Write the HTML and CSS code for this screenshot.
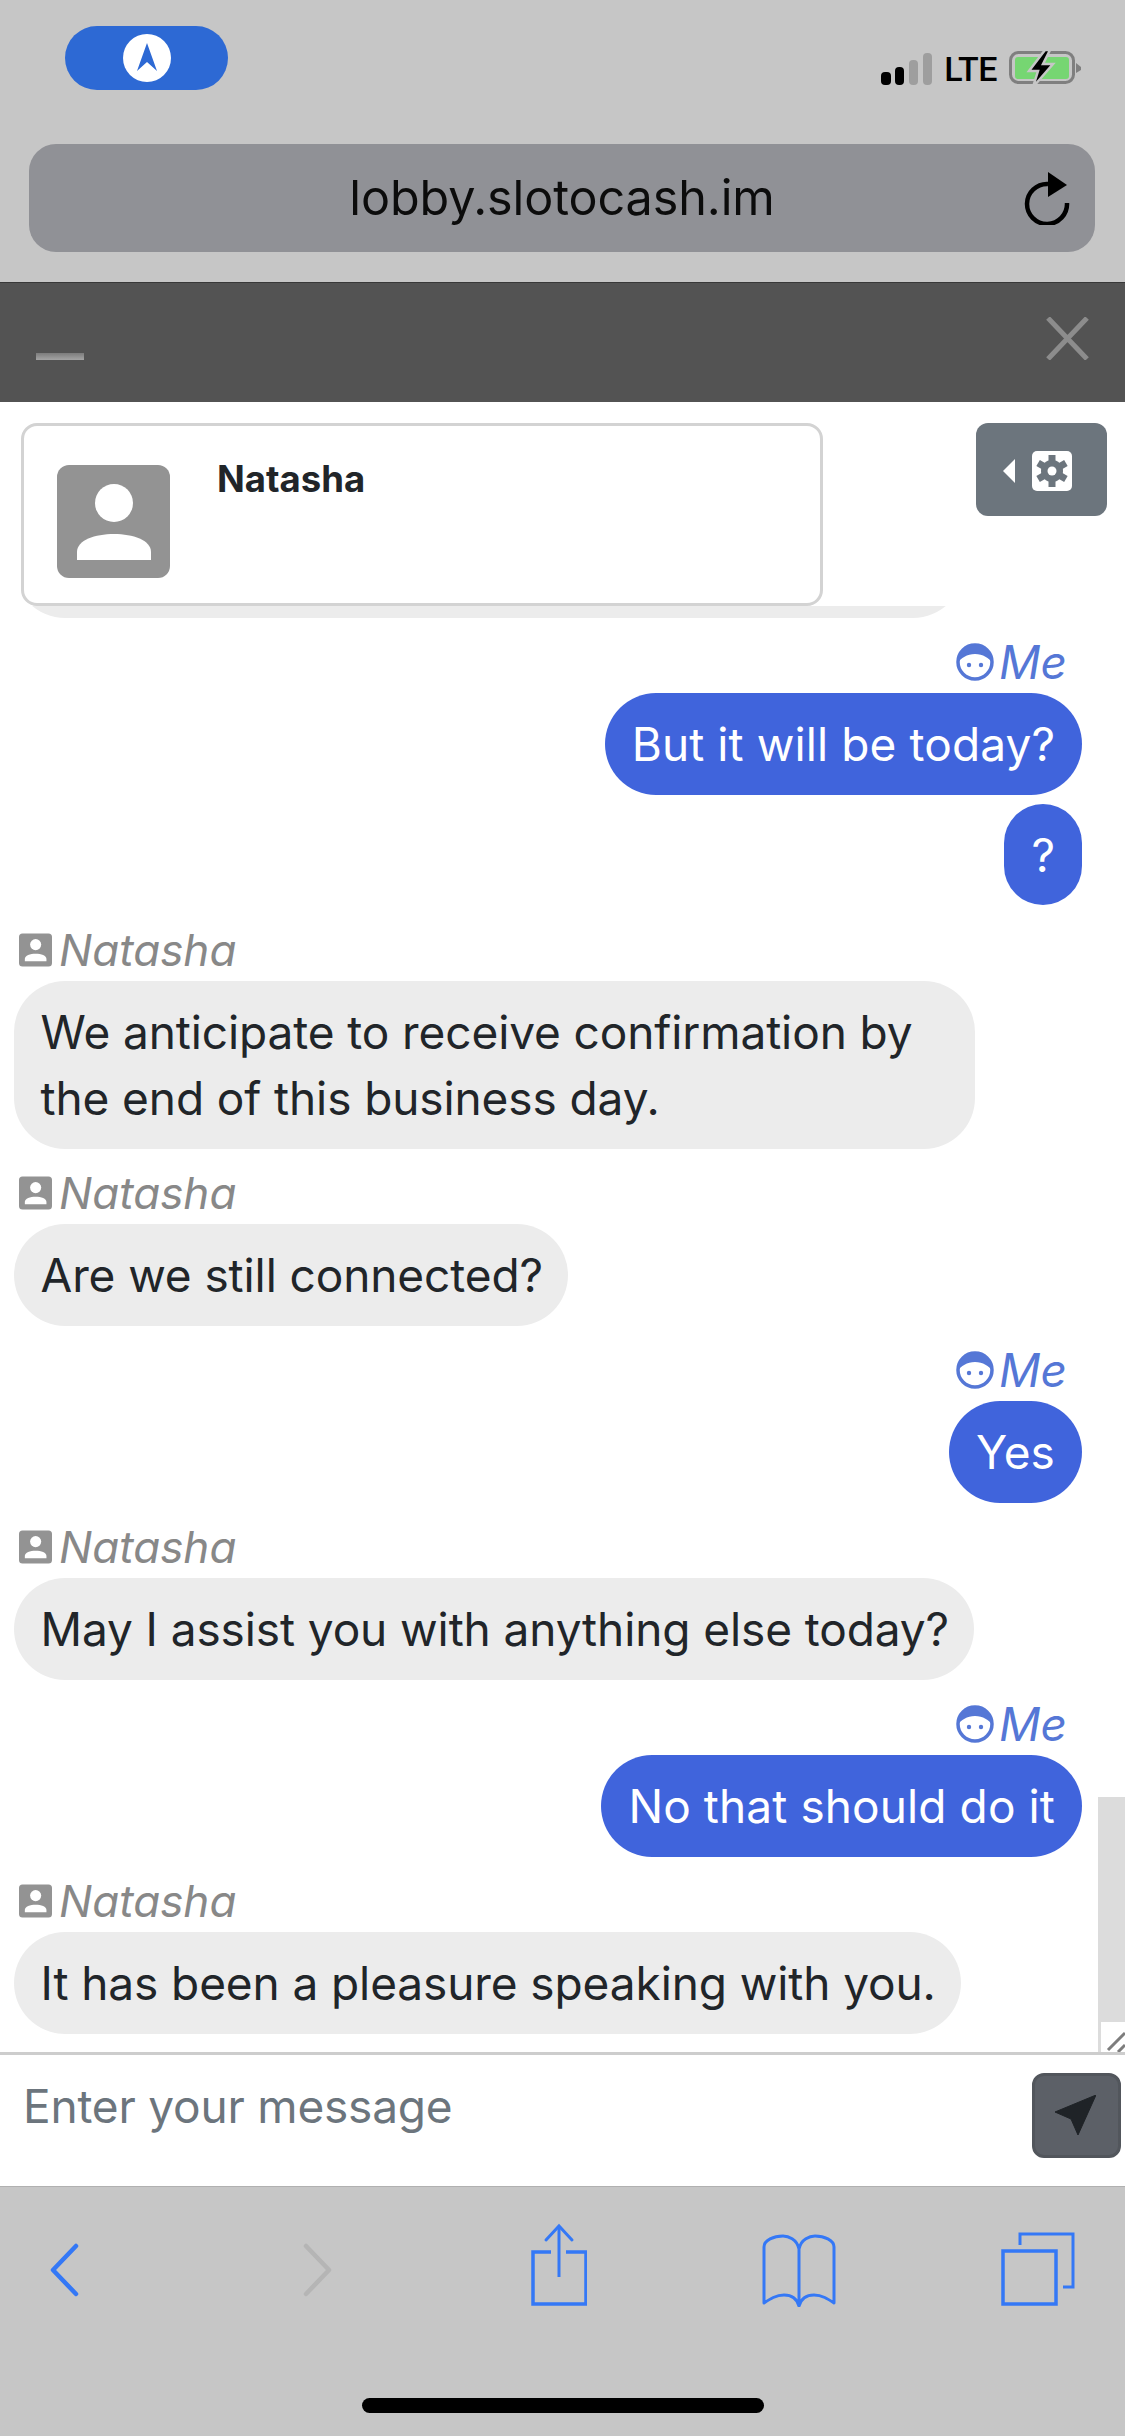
FILE: index.html
```html
<!DOCTYPE html>
<html lang="en">
<head>
<meta charset="utf-8">
<title>Chat</title>
<link rel="stylesheet" href="styles.css">
</head>
<body>
<svg class="defs" width="0" height="0" aria-hidden="true">
  <symbol id="contact" viewBox="0 0 113 113">
    <rect width="113" height="113" rx="12" fill="#939393"/>
    <ellipse cx="57" cy="38" rx="19" ry="19" fill="#fff"/>
    <path d="M20 95V87C20 75 38 69 57 69S94 75 94 87V95Z" fill="#fff"/>
  </symbol>
  <symbol id="face" viewBox="0 0 38 38">
    <circle cx="19" cy="19" r="17" fill="none" stroke="#5577d6" stroke-width="3.500"/>
    <path d="M1.500 20A17.500 17.500 0 0 1 36.500 20C33 15 27 11 19 11S5 15 1.500 20Z" fill="#5577d6"/>
    <circle cx="13" cy="22" r="2.200" fill="#5577d6"/>
    <circle cx="25" cy="22" r="2.200" fill="#5577d6"/>
  </symbol>
</svg>
<div class="phone">
  <header class="status-bar">
    <svg class="nav-pill" width="163" height="64" viewBox="0 0 163 64">
      <rect width="163" height="64" rx="32" fill="#2d69d4"/>
      <circle cx="82" cy="32" r="24" fill="#fff"/>
      <path d="M82 17L72 45L82 36L92 45Z" fill="#2d69d4"/>
    </svg>
    <div class="status-right">
      <svg width="51" height="32" viewBox="0 0 51 32">
        <rect x="0" y="19" width="10" height="13" rx="4" fill="#000"/>
        <rect x="14" y="14" width="9" height="18" rx="4" fill="#000"/>
        <rect x="28" y="7" width="9" height="25" rx="4" fill="#9e9e9e"/>
        <rect x="42" y="0" width="9" height="32" rx="4" fill="#9e9e9e"/>
      </svg>
      <span class="lte">LTE</span>
      <svg class="battery" width="72" height="36" viewBox="0 0 72 36">
        <rect x="1.500" y="1.500" width="63" height="30" rx="8" fill="none" stroke="#7f7f7f" stroke-width="3"/>
        <rect x="6" y="6" width="54" height="22" rx="3" fill="#76d672"/>
        <path d="M67 12L72 16V19L67 22Z" fill="#7f7f7f"/>
        <path d="M36 -1L20 20H29L24 36L44 13H34L41 -1Z" fill="#000" stroke="#c6c6c6" stroke-width="2.500"/>
      </svg>
    </div>
  </header>
  <div class="url-row">
    <div class="url-bar">
      <span class="url-text">lobby.slotocash.im</span>
      <svg class="reload" width="46" height="54" viewBox="0 0 46 54">
        <path d="M24 13A20 20 0 1 0 43 32" fill="none" stroke="#000" stroke-width="4.500"/>
        <path d="M24 1L43 14L24 26Z" fill="#000"/>
      </svg>
    </div>
  </div>
  <div class="chat-header">
    <span class="minimize"></span>
    <svg class="close" width="43" height="43" viewBox="0 0 43 43">
      <path d="M2 1L41 42M41 1L2 42" stroke="#8c8c8c" stroke-width="5" fill="none"/>
    </svg>
  </div>
  <main class="chat-body">
    <div class="messages">
      <div class="bubble in partial">&nbsp;</div>

      <div class="label me"><svg width="38" height="38"><use href="#face"/></svg><span>Me</span></div>
      <div class="bubble out">But it will be today?</div>
      <div class="bubble out">?</div>

      <div class="label them"><svg width="33" height="34"><use href="#contact"/></svg><span>Natasha</span></div>
      <div class="bubble in">We anticipate to receive confirmation by the end of this business day.</div>

      <div class="label them"><svg width="33" height="34"><use href="#contact"/></svg><span>Natasha</span></div>
      <div class="bubble in">Are we still connected?</div>

      <div class="label me"><svg width="38" height="38"><use href="#face"/></svg><span>Me</span></div>
      <div class="bubble out">Yes</div>

      <div class="label them"><svg width="33" height="34"><use href="#contact"/></svg><span>Natasha</span></div>
      <div class="bubble in">May I assist you with anything else today?</div>

      <div class="label me"><svg width="38" height="38"><use href="#face"/></svg><span>Me</span></div>
      <div class="bubble out">No that should do it</div>

      <div class="label them"><svg width="33" height="34"><use href="#contact"/></svg><span>Natasha</span></div>
      <div class="bubble in">It has been a pleasure speaking with you.</div>
    </div>

    <div class="chat-top">
      <section class="contact-card">
        <svg width="113" height="113"><use href="#contact"/></svg>
        <strong class="contact-name">Natasha</strong>
      </section>
      <button class="settings" type="button">
        <svg width="69" height="40" viewBox="0 0 69 40">
          <path d="M0 20L12 8V32Z" fill="#fff"/>
          <rect x="29" y="0" width="40" height="40" rx="5" fill="#fff"/>
          <g stroke="#6c757d" stroke-width="7">
            <path d="M49 4V36"/>
            <path d="M35.100 12L62.900 28"/>
            <path d="M35.100 28L62.900 12"/>
          </g>
          <circle cx="49" cy="20" r="11" fill="#6c757d"/>
          <circle cx="49" cy="20" r="4.500" fill="#fff"/>
        </svg>
      </button>
    </div>
    <div class="scrollbar"></div>
    <div class="resizer">
      <svg width="24" height="30" viewBox="0 0 24 30">
        <path d="M7 28L24 11M17 30L24 23" stroke="#7d7d7d" stroke-width="3" fill="none"/>
      </svg>
    </div>
  </main>
  <div class="composer">
    <div class="placeholder">Enter your message</div>
    <button class="send" type="button">
      <svg width="41" height="40" viewBox="0 0 41 40">
        <path d="M41 0L0 17L16 24L23 40Z" fill="#1f2327" stroke="#1f2327" stroke-width="1" stroke-linejoin="round"/>
      </svg>
    </button>
  </div>
  <footer class="toolbar">
    <div class="tool-row">
      <svg width="31" height="84" viewBox="0 0 31 84">
        <path d="M27 23L4 47L27 71" fill="none" stroke="#3478f6" stroke-width="4.500" stroke-linecap="round" stroke-linejoin="round"/>
      </svg>
      <svg width="31" height="84" viewBox="0 0 31 84">
        <path d="M4 23L27 47L4 71" fill="none" stroke="#b5b5b5" stroke-width="4.500" stroke-linecap="round" stroke-linejoin="round"/>
      </svg>
      <svg width="56" height="84" viewBox="0 0 56 84">
        <path d="M20 29H2V81H55V29H35" fill="none" stroke="#3478f6" stroke-width="3.500"/>
        <path d="M28 3V54" fill="none" stroke="#3478f6" stroke-width="3"/>
        <path d="M15 17L28 3L41 17" fill="none" stroke="#3478f6" stroke-width="3" stroke-linecap="round"/>
      </svg>
      <svg width="74" height="84" viewBox="0 0 74 84">
        <path d="M37 26C35 16 26 13 21 13C12 13 2 17 2 24V80C8 76 14 72 22 72C30 72 35 76 37 83C39 76 44 72 52 72C60 72 66 76 72 80V24C72 17 62 13 53 13C48 13 39 16 37 26V83" fill="none" stroke="#3478f6" stroke-width="3" stroke-linejoin="round" stroke-linecap="round"/>
      </svg>
      <svg width="74" height="84" viewBox="0 0 74 84">
        <rect x="2" y="28" width="53" height="53" fill="none" stroke="#3478f6" stroke-width="3.500"/>
        <path d="M19 22V11H72V64H62" fill="none" stroke="#3478f6" stroke-width="3"/>
      </svg>
    </div>
    <div class="home-indicator"></div>
  </footer>
</div>
</body>
</html>
```
FILE: styles.css
```css
* { box-sizing: border-box; }
html, body { margin: 0; padding: 0; }
body {
  background: #c6c6c6;
  font-family: Inter, "Liberation Sans", sans-serif;
}
.defs { position: absolute; }
.phone {
  width: 1125px;
  height: 2436px;
  display: flex;
  flex-direction: column;
  overflow: hidden;
  background: #c6c6c6;
}
svg { display: block; flex: none; }

/* status bar */
.status-bar {
  height: 144px;
  padding: 26px 44px 0 65px;
  display: flex;
  justify-content: space-between;
  align-items: flex-start;
}
.status-right {
  display: flex;
  align-items: flex-end;
  margin-top: 27px;
  height: 32px;
}
.lte {
  font-family: Roboto, sans-serif;
  font-weight: 500;
  font-size: 34px;
  line-height: 32px;
  color: #000;
  margin: 0 12px 0 12px;
  letter-spacing: -0.5px;
}
.battery { margin-bottom: -2px; }

/* url */
.url-row {
  height: 138px;
  padding: 0 30px 0 29px;
}
.url-bar {
  height: 108px;
  border-radius: 27px;
  background: #909196;
  display: flex;
  align-items: center;
  justify-content: center;
  position: relative;
}
.url-text {
  font-size: 48.500px;
  line-height: 108px;
  letter-spacing: -0.1px;
  color: #0c0c0c;
}
.reload {
  position: absolute;
  right: 25px;
  top: 27px;
}

/* header */
.chat-header {
  height: 120px;
  background: #535353;
  border-top: 1px solid #383838;
  padding: 34px 36px 0;
  display: flex;
  justify-content: space-between;
  align-items: flex-start;
}
.minimize {
  display: block;
  width: 48px;
  height: 7px;
  margin-top: 36px;
  background: linear-gradient(#7c7c7c, #a4a4a4);
}

/* chat */
.chat-body {
  height: 1650px;
  background: #fff;
  position: relative;
  overflow: hidden;
}
.messages {
  height: 100%;
  padding: 0 43px 18px 14px;
  display: flex;
  flex-direction: column;
  justify-content: flex-end;
  align-items: flex-start;
}
.bubble {
  max-width: 961px;
  padding: 17.800px 27px;
  border-radius: 51px;
  font-size: 46px;
  line-height: 66px;
  flex: none;
}
.bubble + .bubble { margin-top: 9px; }
.bubble.in {
  background: #ececec;
  color: #212529;
  letter-spacing: -0.1px;
  padding-left: 26.500px;
  padding-right: 25px;
}
.bubble.out {
  background: #4064dc;
  color: #fff;
  align-self: flex-end;
  letter-spacing: 0.100px;
}
.bubble.partial { width: 950px; }
.label {
  height: 75.500px;
  padding-top: 13px;
  display: flex;
  align-items: center;
  flex: none;
  font-style: italic;
  font-size: 44px;
  line-height: 58px;
  gap: 7px;
}
.label.me {
  align-self: flex-end;
  padding-right: 15px;
  color: #5577d6;
  font-size: 46px;
  gap: 5px;
}
.label.them {
  padding-left: 5px;
  color: #888;
}
.chat-top {
  position: absolute;
  left: 0;
  top: 0;
  width: 100%;
  height: 204px;
  background: #fff;
  padding: 21px 18px 0 21px;
  display: flex;
  justify-content: space-between;
  align-items: flex-start;
}
.contact-card {
  width: 802px;
  height: 183px;
  background: #fff;
  border: 3px solid #d3d3d3;
  border-radius: 16px;
  padding: 39px 33px;
  display: flex;
  align-items: flex-start;
  gap: 47px;
}
.contact-name {
  font-size: 36.500px;
  font-weight: 700;
  line-height: 44px;
  color: #212529;
  margin-top: -8px;
}
.settings {
  width: 131px;
  height: 93px;
  padding: 28px 0 0 27px;
  border: 0;
  border-radius: 12px;
  background: #6c757d;
  display: flex;
  align-items: flex-start;
}
.scrollbar {
  position: absolute;
  right: 0;
  bottom: 0;
  width: 27px;
  height: 255px;
  background: #dcdcdc;
}
.resizer {
  position: absolute;
  right: 0;
  bottom: 0;
  width: 24px;
  height: 30px;
  background: #fff;
}

/* composer */
.composer {
  height: 135px;
  background: #fff;
  border-top: 3px solid #cdcdcd;
  border-bottom: 1px solid #b0b0b0;
  padding: 18px 4px 0 23px;
  display: flex;
  justify-content: space-between;
  align-items: flex-start;
}
.placeholder {
  font-size: 46px;
  line-height: 66px;
  letter-spacing: -0.2px;
  color: #6c757d;
}
.send {
  width: 89px;
  height: 85px;
  padding: 19px 0 0 20px;
  border: 3px solid #52565c;
  border-radius: 12px;
  background: #5c6067;
  display: flex;
  align-items: flex-start;
}

/* toolbar */
.toolbar {
  flex: 1;
  padding-top: 36px;
  display: flex;
  flex-direction: column;
}
.tool-row {
  display: grid;
  grid-template-columns: 253px 229px 231px 239px 1fr;
  padding-left: 49px;
}
.home-indicator {
  width: 402px;
  height: 15px;
  margin: 91px auto 0;
  border-radius: 8px;
  background: #000;
}
```
